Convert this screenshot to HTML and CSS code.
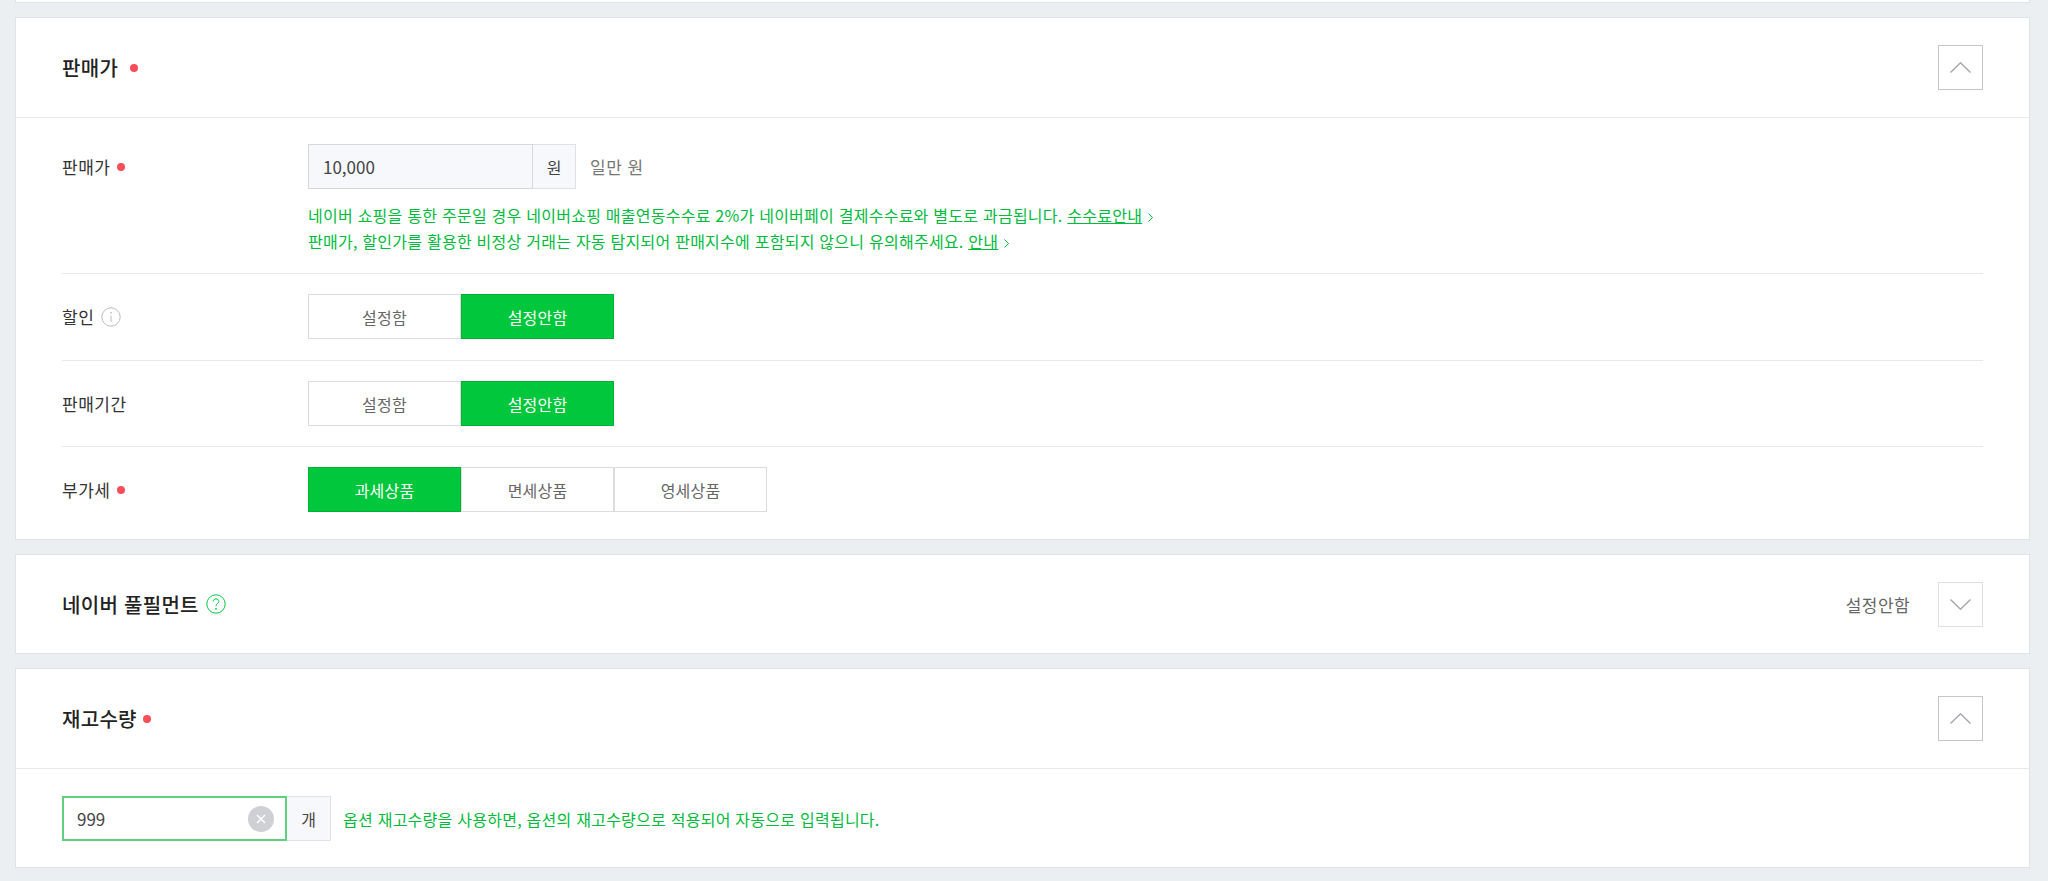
FILE: index.html
```html
<!DOCTYPE html>
<html lang="ko">
<head>
<meta charset="utf-8">
<title>상품 등록</title>
<link rel="stylesheet" href="styles.css">
</head>
<body>
<div class="page">
  <div class="stub"></div>

  <section class="card">
    <header class="card-head">
      <h2 class="title">판매가<i class="dot dot-title"></i></h2>
      <button class="toggle toggle-open" aria-label="접기">
        <svg width="21" height="11" viewBox="0 0 21 11"><path d="M0.5 10.5 10.5 0.8 20.5 10.5" class="chev"/></svg>
      </button>
    </header>
    <div class="card-body">
      <div class="row row-first">
        <div class="label">판매가<i class="dot"></i></div>
        <div class="field">
          <div class="inline">
            <div class="input input-price">10,000</div>
            <div class="unit unit-price">원</div>
            <span class="korean">일만 원</span>
          </div>
          <p class="hint hint-block">네이버 쇼핑을 통한 주문일 경우 네이버쇼핑 매출연동수수료 2%가 네이버페이 결제수수료와 별도로 과금됩니다. <a class="link">수수료안내</a><svg class="arrow" width="5" height="9" viewBox="0 0 5 9"><path d="M0.5 0.5 4.5 4.5 0.5 8.5"/></svg><br>판매가, 할인가를 활용한 비정상 거래는 자동 탐지되어 판매지수에 포함되지 않으니 유의해주세요. <a class="link">안내</a><svg class="arrow" width="5" height="9" viewBox="0 0 5 9"><path d="M0.5 0.5 4.5 4.5 0.5 8.5"/></svg></p>
        </div>
      </div>
      <div class="row row-wide">
        <div class="label">할인<svg class="help" width="20" height="20" viewBox="0 0 20 20"><circle cx="10" cy="10" r="9.2" class="info-ring"/><path d="M10 8.5V15" class="info-ring"/><circle cx="10" cy="5.8" r="0.9" fill="#bbb"/></svg></div>
        <div class="field seg">
          <span class="btn">설정함</span><span class="btn on">설정안함</span>
        </div>
      </div>
      <div class="row">
        <div class="label">판매기간</div>
        <div class="field seg">
          <span class="btn">설정함</span><span class="btn on">설정안함</span>
        </div>
      </div>
      <div class="row row-last">
        <div class="label">부가세<i class="dot"></i></div>
        <div class="field seg">
          <span class="btn on">과세상품</span><span class="btn">면세상품</span><span class="btn">영세상품</span>
        </div>
      </div>
    </div>
  </section>

  <section class="card">
    <header class="card-head card-head-solo">
      <h2 class="title">네이버 풀필먼트<svg class="help help-q" width="20" height="20" viewBox="0 0 20 20"><circle cx="10" cy="10" r="9.2" class="q-ring"/><path d="M7.2 7.6C7.2 5.9 8.4 4.9 10 4.9 11.6 4.9 12.8 5.9 12.8 7.4 12.8 9.4 10 9.6 10 12.2" class="q-ring"/><circle cx="10" cy="14.8" r="0.9" fill="#00c73c"/></svg></h2>
      <div class="head-right">
        <span class="state">설정안함</span>
        <button class="toggle" aria-label="펼치기">
          <svg width="21" height="11" viewBox="0 0 21 11"><path d="M0.5 0.5 10.5 10.2 20.5 0.5" class="chev"/></svg>
        </button>
      </div>
    </header>
  </section>

  <section class="card">
    <header class="card-head">
      <h2 class="title">재고수량<i class="dot dot-stock"></i></h2>
      <button class="toggle toggle-open" aria-label="접기">
        <svg width="21" height="11" viewBox="0 0 21 11"><path d="M0.5 10.5 10.5 0.8 20.5 10.5" class="chev"/></svg>
      </button>
    </header>
    <div class="card-body stock-body">
      <div class="inline">
        <div class="input input-stock">999<span class="clear"><svg width="10" height="10" viewBox="0 0 10 10"><path d="M1 1 9 9M9 1 1 9" class="clear-x"/></svg></span></div>
        <div class="unit unit-stock">개</div>
        <p class="hint hint-inline">옵션 재고수량을 사용하면, 옵션의 재고수량으로 적용되어 자동으로 입력됩니다.</p>
      </div>
    </div>
  </section>
</div>
</body>
</html>
```
FILE: styles.css
```css
* { box-sizing: border-box; }
html, body { margin: 0; height: 100%; overflow: hidden; }
body {
  background: #eceff2;
  font-family: "Noto Sans CJK KR", "Noto Sans", sans-serif;
  color: #333;
  font-size: 15px;
}
.page { padding: 0 18px 0 15px; display: flex; flex-direction: column; gap: 14px; }
.stub { height: 3px; background: #fff; border-bottom: 1px solid #dfe2e6; border-left: 1px solid #dfe2e6; border-right: 1px solid #dfe2e6; }
.card { background: #fff; border: 1px solid #dfe2e6; }
.card-head {
  height: 100px;
  padding: 0 46px;
  border-bottom: 1px solid #e8e8e8;
  display: flex;
  align-items: center;
  justify-content: space-between;
}
.card-head-solo { height: 98px; border-bottom: 0; }
.title { margin: 0; font-size: 20px; font-weight: 500; color: #222; letter-spacing: 0.3px; display: flex; align-items: center; }
.dot { display: inline-block; width: 8px; height: 8px; border-radius: 50%; background: #fa4d5a; margin-left: 7px; }
.dot-title { margin-left: 12px; }
.dot-stock { margin-left: 6px; }
.toggle {
  width: 45px; height: 45px; padding: 0;
  background: #fff; border: 1px solid #c4c6ca;
  display: flex; align-items: center; justify-content: center;
}
.head-right { display: flex; align-items: center; gap: 28px; }
.head-right .toggle { border-color: #dedfe2; }
.state { color: #666; font-size: 17px; letter-spacing: 0.4px; }
.chev { fill: none; stroke: #a4a6ac; stroke-width: 1.4; }
.card-body { padding: 0 46px; }
.row { display: flex; padding: 20px 0; border-bottom: 1px solid #e8e8e8; }
.row-first { padding-top: 26px; padding-bottom: 19px; }
.row-wide { padding-bottom: 21px; }
.row-last { border-bottom: 0; padding-bottom: 27px; }
.label { width: 246px; height: 45px; display: flex; align-items: center; font-size: 17px; color: #333; letter-spacing: 0.5px; }
.inline { display: flex; align-items: center; }
.input {
  height: 45px; display: flex; align-items: center; padding-left: 14px;
  font-size: 17px; color: #444;
}
.input-price { width: 225px; background: #f7f8fb; border: 1px solid #d6d8dc; }
.unit { height: 45px; display: flex; align-items: center; justify-content: center; background: #f7f8fb; border: 1px solid #dfe1e5; border-left: 0; color: #444; font-size: 16px; }
.unit-price { width: 43px; }
.korean { margin-left: 14px; color: #777; font-size: 17px; letter-spacing: 0.5px; }
.hint { margin: 0; color: #00bb3c; font-size: 16px; line-height: 26px; letter-spacing: 0.25px; }
.hint-block { margin-top: 13px; }
.link { text-decoration: underline; }
.arrow { margin-left: 6px; fill: none; stroke: currentColor; stroke-width: 1; }
.seg { display: flex; }
.btn {
  width: 153px; height: 45px; display: flex; align-items: center; justify-content: center;
  background: #fff; border: 1px solid #dcdcdc; color: #666; font-size: 16px; letter-spacing: 0.2px;
}
.btn.on { background: #00c73c; border-color: #00b236; color: #fff; }
.help { margin-left: 7px; }
.info-ring { fill: none; stroke: #bbb; stroke-width: 1; }
.q-ring { fill: none; stroke: #00c73c; stroke-width: 1; }
.stock-body { padding-top: 27px; padding-bottom: 26px; }
.input-stock {
  width: 225px; background: #fff; border: 2px solid #5fd17e; position: relative; padding-left: 13px;
}
.clear {
  position: absolute; right: 11px; top: 8px; width: 26px; height: 26px; border-radius: 50%;
  background: #cfd0d3; display: flex; align-items: center; justify-content: center;
}
.clear-x { fill: none; stroke: #fff; stroke-width: 1.5; }
.unit-stock { width: 44px; }
.hint-inline { margin-left: 12px; }
```
